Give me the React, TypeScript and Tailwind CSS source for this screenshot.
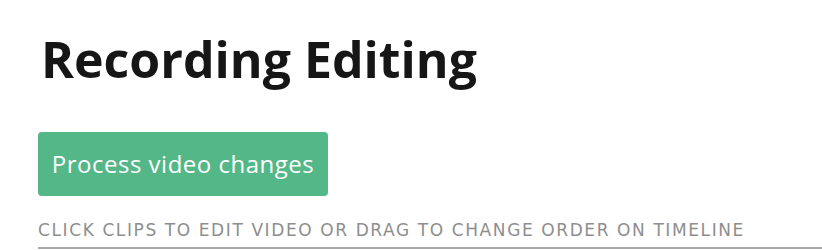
import React from "react";

export default function App() {
  return (
    <div className="min-h-[250px] bg-white pl-[38px] pt-[23px] font-['Open_Sans',sans-serif]">
      <h1 className="text-[50px] font-bold leading-[72px] text-[#161616] pl-[3px]">
        Recording Editing
      </h1>
      <button className="mt-[37px] h-[64px] w-[290px] rounded-[4px] bg-[#54b787] text-[24px] font-medium tracking-[0.5px] text-white">
        Process video changes
      </button>
      <div className="mt-[24px] border-b-2 border-[#a9a9a9] pb-[7px]">
        <p className="font-['DejaVu_Sans',sans-serif] text-[17px] leading-[20px] uppercase text-[#8e8e8e] tracking-[1.6px]">
          Click clips to edit video or drag to change order on timeline
        </p>
      </div>
    </div>
  );
}
